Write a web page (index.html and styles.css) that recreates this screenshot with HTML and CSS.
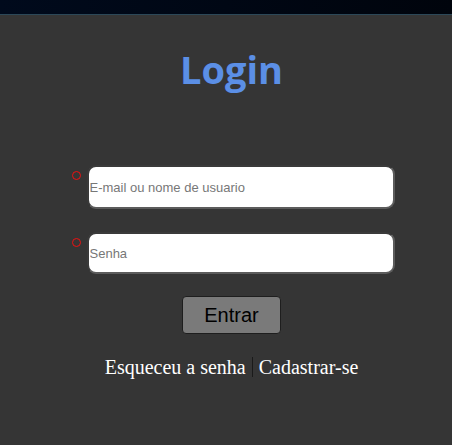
FILE: index.html
```html
<!DOCTYPE html>
<html lang="pt">
<head>
<meta charset="utf-8">
<title>Login</title>
<link rel="stylesheet" href="styles.css">
</head>
<body>
<div class="topbar"></div>
<main class="page">
  <h1 class="title">Login</h1>
  <form class="form">
    <div class="field">
      <span class="req"></span>
      <input class="input" type="text" placeholder="E-mail ou nome de usuario">
    </div>
    <div class="field">
      <span class="req"></span>
      <input class="input" type="password" placeholder="Senha">
    </div>
    <button class="btn" type="button">Entrar</button>
    <div class="links">
      <a class="link" href="#">Esqueceu a senha</a>
      <span class="sep"></span>
      <a class="link" href="#">Cadastrar-se</a>
    </div>
  </form>
</main>
</body>
</html>
```
FILE: styles.css
```css
html, body {
  margin: 0;
  padding: 0;
  background: #353535;
  height: 100%;
}
.topbar {
  height: 14px;
  background: linear-gradient(90deg, #000a1c, #00040c);
  border-bottom: 1px solid #2c4858;
}
.page {
  display: flex;
  flex-direction: column;
  align-items: center;
  padding-left: 11px;
}
.title {
  margin: 28px 0 0;
  font-family: "Open Sans", "Noto Sans", sans-serif;
  font-weight: 700;
  font-size: 38px;
  line-height: 52px;
  color: #5b8fe6;
}
.form {
  margin-top: 70px;
  display: flex;
  flex-direction: column;
  align-items: center;
}
.field {
  display: flex;
  align-items: flex-start;
  gap: 6px;
  margin-bottom: 23px;
  margin-left: 3px;
}
.field + .field {
  margin-bottom: 22px;
}
.req {
  width: 7px;
  height: 7px;
  margin-top: 6px;
  border: 1.5px solid #f01010;
  border-radius: 50%;
}
.input {
  box-sizing: border-box;
  width: 308px;
  height: 44px;
  margin: 0;
  padding: 0 1px;
  border: 2px solid #5c5c5c;
  border-top-color: #3a3a3a;
  border-left-color: #3a3a3a;
  border-radius: 9px;
  background: #fff;
  font-family: "Liberation Sans", Arial, sans-serif;
  font-size: 13px;
  color: #333;
  outline: none;
}
.field + .field .input {
  height: 42px;
}
.input::placeholder {
  color: #777;
}
.btn {
  box-sizing: border-box;
  width: 99px;
  height: 38px;
  margin: 0;
  background: #7a7a7a;
  border: 1px solid #1e1e1e;
  border-radius: 4px;
  font-family: "Liberation Sans", Arial, sans-serif;
  font-size: 20px;
  color: #000;
}
.links {
  margin-top: 21px;
  display: flex;
  align-items: center;
  gap: 6px;
  font-family: "Liberation Serif", "Times New Roman", serif;
  font-size: 20px;
  line-height: 24px;
}
.link {
  color: #fff;
  text-decoration: none;
}
.sep {
  width: 1px;
  height: 20px;
  background: #1a1a1a;
}
```
